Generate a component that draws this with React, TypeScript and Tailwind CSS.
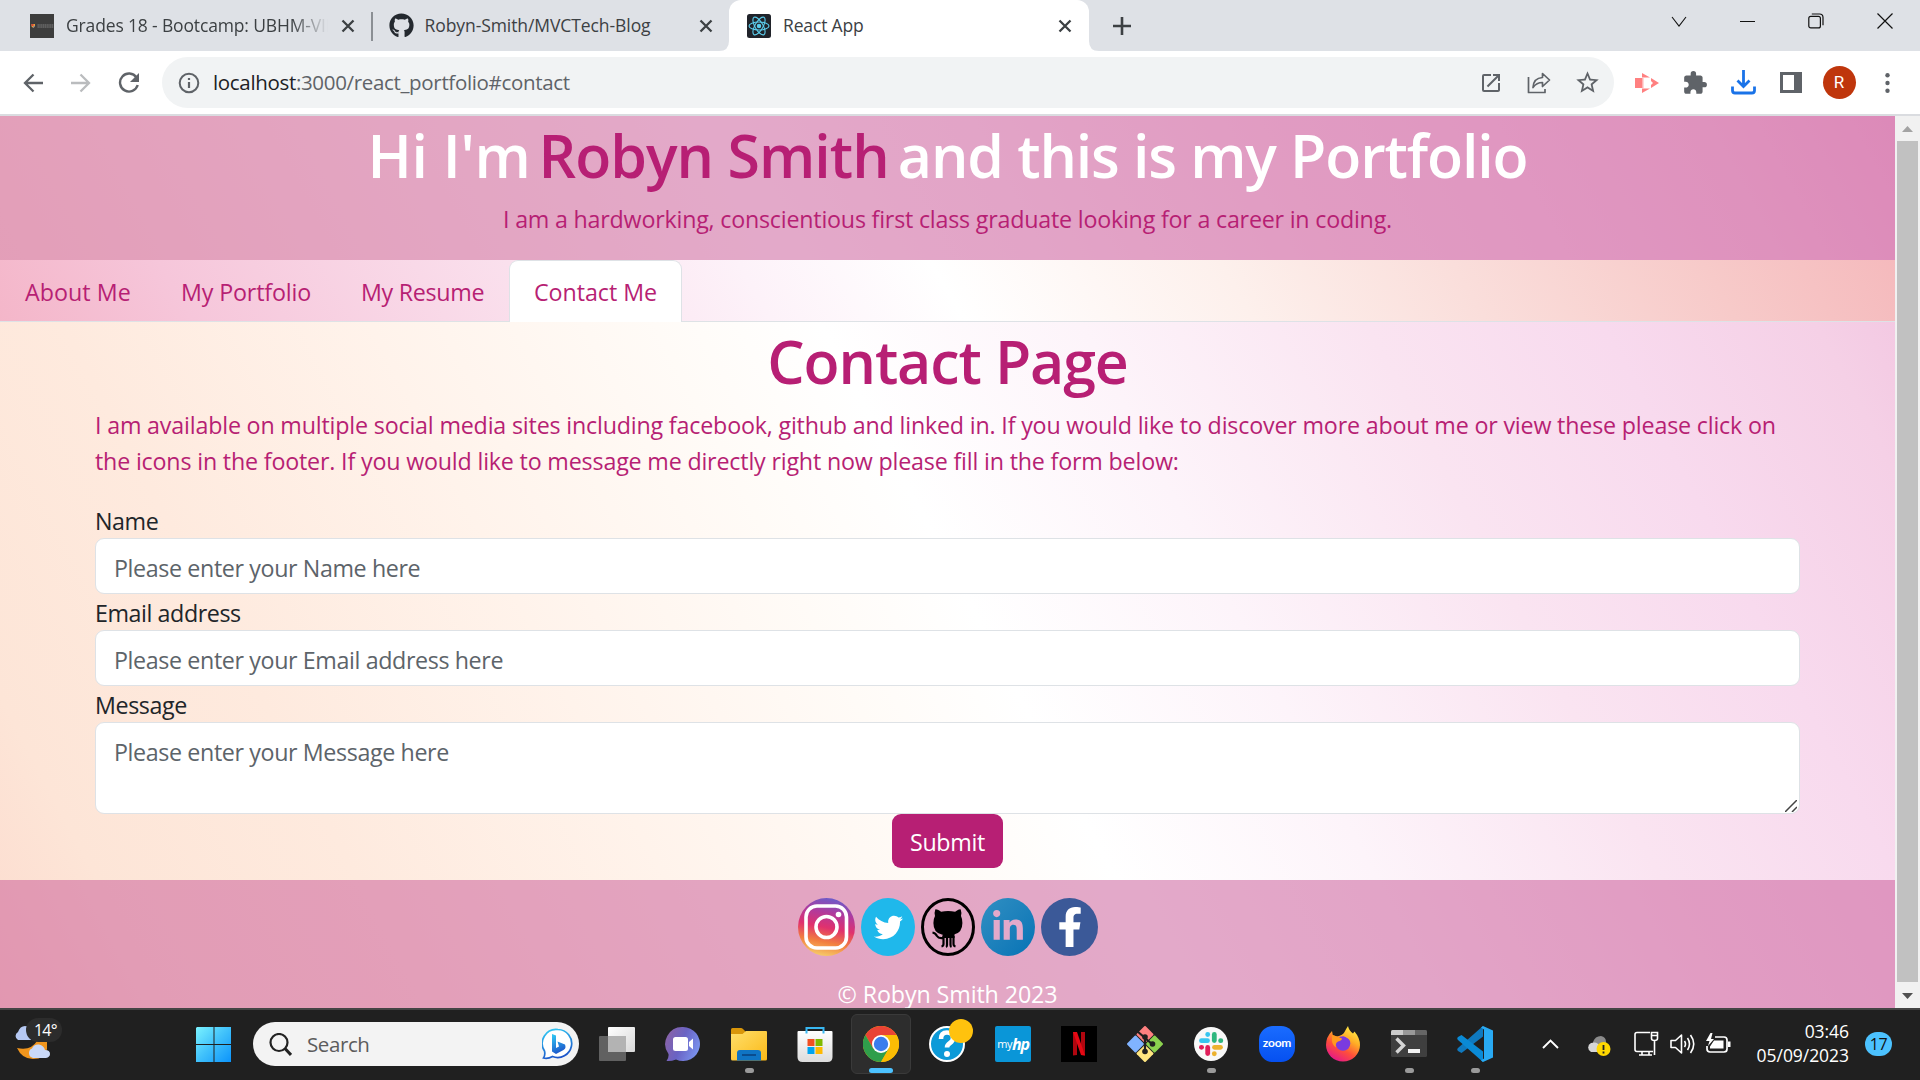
import type { ReactNode } from "react";
import { FaFacebookF, FaGithub, FaLinkedinIn, FaTwitter } from "react-icons/fa";
import { MdExtension, MdOpenInNew, MdStarBorder } from "react-icons/md";

function CloseX() {
  return (
    <svg width="14" height="14" viewBox="0 0 14 14" stroke="#3c4043" strokeWidth="2.3">
      <path d="M1.5 1.5l11 11M12.5 1.5l-11 11" />
    </svg>
  );
}

function Cell({ children }: { children: ReactNode }) {
  return <div className="flex w-12 shrink-0 items-center justify-center">{children}</div>;
}

function ReactMark() {
  return (
    <svg width="24" height="24" viewBox="0 0 24 24" fill="none" stroke="#5ccfee" strokeWidth="1.1">
      <rect width="24" height="24" rx="2.5" fill="#20232a" stroke="none" />
      <ellipse cx="12" cy="12" rx="10" ry="4" />
      <ellipse cx="12" cy="12" rx="10" ry="4" transform="rotate(60 12 12)" />
      <ellipse cx="12" cy="12" rx="10" ry="4" transform="rotate(120 12 12)" />
      <circle cx="12" cy="12" r="1.7" fill="#5ccfee" />
    </svg>
  );
}

function TabStrip() {
  return (
    <div className="flex h-[51px] bg-[#dee1e6] text-[17.5px] leading-[51px] text-[#3c4043]">
      <div className="flex w-[371px] items-center pl-[30px]">
        <svg width="24" height="24" viewBox="0 0 24 24">
          <rect width="24" height="24" fill="#3d3d3d" />
          <path d="M1.5 10h3.5v2.5l-1.7 1.6-1.8-1.6z" fill="#e8a33d" />
          <path d="M1.5 10h2v2h-2z" fill="#d8483a" />
          <path d="M3.5 12h1.5l-1.5 2z" fill="#4b74c9" />
          <path d="M7.5 11h16M7.5 13h16" stroke="#8a8a8a" strokeWidth=".9" strokeDasharray="1.4 .4" />
        </svg>
        <div className="ml-3 w-[262px] overflow-hidden whitespace-nowrap tracking-[-0.15px] [mask-image:linear-gradient(90deg,#000_86%,transparent)]">
          Grades 18 - Bootcamp: UBHM-VIRT
        </div>
        <div className="ml-[13px]"><CloseX /></div>
      </div>
      <div className="mt-3 h-[29px] w-[1.5px] bg-[#8b8f94]" />
      <div className="flex w-[356.5px] items-center pl-[16px]">
        <FaGithub size={25} color="#24292f" />
        <div className="ml-[11px] w-[274px] whitespace-nowrap tracking-[-0.08px]">Robyn-Smith/MVCTech-Blog</div>
        <CloseX />
      </div>
      <div className="relative flex w-[360px] items-center rounded-t-[12px] bg-white pl-[18px]">
        <svg className="absolute bottom-0 -left-[10px]" width="10" height="10"><path d="M10 0v10H0Q10 10 10 0" fill="#fff" /></svg>
        <svg className="absolute bottom-0 -right-[10px]" width="10" height="10"><path d="M0 0v10h10Q0 10 0 0" fill="#fff" /></svg>
        <ReactMark />
        <div className="ml-3 w-[275px] tracking-[-0.15px]">React App</div>
        <CloseX />
      </div>
      <div className="flex w-[66px] items-center justify-center">
        <svg width="18" height="18" viewBox="0 0 18 18" stroke="#3c4043" strokeWidth="2.6"><path d="M9 0v18M0 9h18" /></svg>
      </div>
      <div className="ml-auto flex h-[42px] items-center pr-px">
        <div className="flex w-[68px] justify-center">
          <svg width="16" height="11" viewBox="0 0 16 11" fill="none" stroke="#111" strokeWidth="1.1"><path d="M1 1l7 9 7-9" /></svg>
        </div>
        <div className="flex w-[69px] justify-center"><div className="h-px w-[15px] bg-[#111]" /></div>
        <div className="flex w-[68px] justify-center">
          <svg width="16" height="16" viewBox="0 0 16 16" fill="none" stroke="#111" strokeWidth="1.2">
            <rect x=".8" y="3.3" width="11.6" height="11.6" rx="2" />
            <path d="M3.8 1h7.7q3.5 0 3.5 3.5v7.7" />
          </svg>
        </div>
        <div className="flex w-[69px] justify-center">
          <svg width="16" height="16" viewBox="0 0 16 16" stroke="#111" strokeWidth="1.2"><path d="M.5.5l15 15M15.5.5l-15 15" /></svg>
        </div>
      </div>
    </div>
  );
}

function Toolbar() {
  return (
    <div className="flex h-[65px] items-center border-b-2 border-[#dadce0] bg-white pl-[9px]">
      <Cell>
        <svg width="20" height="20" viewBox="0 0 20 20" fill="none" stroke="#5f6368" strokeWidth="2.3"><path d="M20 10H2M10.5 1.5L2 10l8.5 8.5" /></svg>
      </Cell>
      <Cell>
        <svg width="20" height="20" viewBox="0 0 20 20" fill="none" stroke="#babcbe" strokeWidth="2.3"><path d="M0 10h18M9.5 1.5L18 10l-8.5 8.5" /></svg>
      </Cell>
      <Cell>
        <svg width="22" height="22" viewBox="0 0 22 22" fill="none" stroke="#5f6368" strokeWidth="2.4">
          <path d="M18.5 5.5A9 9 0 1 0 19.7 13" />
          <path d="M21 1v9h-9z" fill="#5f6368" stroke="none" />
        </svg>
      </Cell>
      <div className="ml-[9px] flex h-[51px] w-[1452px] items-center rounded-full bg-[#f1f3f4] pr-[3px]">
        <div className="flex w-[51px] justify-center pl-[3px]">
          <svg width="22" height="22" viewBox="0 0 22 22" fill="none" stroke="#5f6368" strokeWidth="2">
            <circle cx="11" cy="11" r="9.3" />
            <path d="M11 10v6M11 6v2" strokeWidth="2.2" />
          </svg>
        </div>
        <div className="flex-1 text-[20.5px] leading-[51px] tracking-[-0.33px] text-[#5f6368]">
          <span className="text-[#202124]">localhost</span>:3000/react_portfolio#contact
        </div>
        <Cell><MdOpenInNew size={24} color="#5f6368" /></Cell>
        <Cell>
          <svg width="24" height="24" viewBox="0 0 24 24" fill="none" stroke="#5f6368" strokeWidth="1.7" strokeLinejoin="round">
            <path d="M1.5 6v15.5H18V18" />
            <path d="M15.5 2.5l7 6.5-7 6.5v-4q-6 0-9.5 5 .5-9.5 9.5-10z" />
          </svg>
        </Cell>
        <Cell><MdStarBorder size={27} color="#5f6368" /></Cell>
      </div>
      <div className="ml-[9px] flex">
        <Cell>
          <svg width="24" height="20" viewBox="0 0 24 20" fill="#ff8080">
            <path d="M0 5h7v10H0z" />
            <path d="M7 4.500V0l8 4.500zM7 15.500V20l8-4.500zM16 5l8 5-8 5v-3l2-2-2-2z" />
            <path d="M7 5h1.500v10H7z" fill="#ffb3b3" />
          </svg>
        </Cell>
        <Cell><MdExtension size={26} color="#5f6368" /></Cell>
        <Cell>
          <svg width="25" height="25" viewBox="0 0 25 25" fill="none" stroke="#1a73e8" strokeWidth="2.8">
            <path d="M12.5 0v16M6.5 10.5l6 6 6-6M1.5 16.5v4q0 2.5 2.5 2.5h17q2.500 0 2.500-2.5v-4" />
          </svg>
        </Cell>
        <Cell>
          <svg width="22" height="21" viewBox="0 0 22 21"><path fill="#5f6368" fillRule="evenodd" d="M0 0h22v21H0zM3 3v15h11V3z" /></svg>
        </Cell>
        <Cell>
          <div className="h-[33px] w-[33px] rounded-full bg-[#bf360c] text-center font-[Roboto] text-[17px] leading-[33px] text-white">R</div>
        </Cell>
        <Cell>
          <svg width="5" height="20" viewBox="0 0 5 20" fill="#5f6368"><circle cx="2.5" cy="2.3" r="2.2" /><circle cx="2.5" cy="10" r="2.2" /><circle cx="2.5" cy="17.7" r="2.2" /></svg>
        </Cell>
      </div>
    </div>
  );
}

function PageHeader() {
  return (
    <header className="h-36 bg-[#c75393]/50 pt-[3px] text-center">
      <h1 className="text-[59px] leading-[72px] font-semibold whitespace-nowrap text-white">
        <span className="tracking-[-0.3px]">Hi I'm</span>
        <span className="mr-[9px] ml-[8px] tracking-[-0.95px] text-[#b71f74]">Robyn Smith</span>
        <span className="tracking-[-1.1px]">and this is my Portfolio</span>
      </h1>
      <p className="mt-[10px] text-[23.25px] leading-9 tracking-[-0.21px] text-[#b71f74]">
        I am a hardworking, conscientious first class graduate looking for a career in coding.
      </p>
    </header>
  );
}

function NavTabs() {
  return (
    <nav className="flex h-[62px] bg-[linear-gradient(60deg,#f4b6c9_0%,#f6c6da_10%,#fae0ed_28%,#fdf2f9_40%,#ffffff_50%,#fdf0ec_65%,#fadedb_77%,#f7cac9_90%,#f5babd_100%)] text-[23.25px] leading-[62px] tracking-[-0.05px] text-[#b71f74]">
      <div className="w-[156px] border-b border-[#dee2e6] pt-[1px] pl-[25px] tracking-[0.05px]">About Me</div>
      <div className="w-[180px] border-b border-[#dee2e6] pt-[1px] pl-[25px] tracking-[-0.15px]">My Portfolio</div>
      <div className="w-[173px] border-b border-[#dee2e6] pt-[1px] pl-[25px] tracking-[-0.3px]">My Resume</div>
      <div className="w-[173px] rounded-t-[9px] border border-b-0 border-[#dee2e6] bg-white pl-[24px]">Contact Me</div>
      <div className="flex-1 border-b border-[#dee2e6]" />
    </nav>
  );
}

function Field({ label, hint, area }: { label: string; hint: string; area?: boolean }) {
  return (
    <div>
      <div className="h-9 pt-px text-[23.25px] leading-9 tracking-[-0.42px] text-[#212529]">{label}</div>
      <div className={area ? "relative h-[92px] rounded-[9px] border border-[#dee2e6] bg-white px-[18px] pt-[11px]" : "h-14 rounded-[9px] border border-[#dee2e6] bg-white px-[18px] pt-[11px]"}>
        <div className="text-[23.25px] leading-9 tracking-[-0.38px] text-[#5d646a]">{hint}</div>
        {area && (
          <svg className="absolute right-[2px] bottom-[1px]" width="12" height="12" viewBox="0 0 12 12" stroke="#444" strokeWidth="1.5"><path d="M0 12L12 0M7 12l5-5" /></svg>
        )}
      </div>
    </div>
  );
}

function SocialIcons() {
  return (
    <div className="flex h-[58px] gap-[6px] pl-[798px]">
      <svg width="57" height="58" viewBox="0 0 57 58">
        <defs>
          <linearGradient id="ig" x1=".35" y1="1" x2=".55" y2="0">
            <stop offset="0" stopColor="#f7cf6b" /><stop offset=".25" stopColor="#f2803f" /><stop offset=".5" stopColor="#e0316e" /><stop offset=".75" stopColor="#b13a9c" /><stop offset="1" stopColor="#6c5bc9" />
          </linearGradient>
        </defs>
        <ellipse cx="28.5" cy="29" rx="28.5" ry="29" fill="url(#ig)" />
        <rect x="8" y="8" width="40.500" height="42" rx="11" fill="none" stroke="#fff" strokeWidth="3.6" />
        <circle cx="28.5" cy="29" r="10.500" fill="none" stroke="#fff" strokeWidth="3.6" />
        <circle cx="40.500" cy="16.500" r="2.8" fill="#fff" />
      </svg>
      <div className="flex h-[58px] w-[54px] items-center justify-center rounded-[50%] bg-[#1fb8eb]"><FaTwitter size={29} color="#fff" /></div>
      <svg width="54" height="58" viewBox="0 0 54 58">
        <ellipse cx="27" cy="29" rx="25.5" ry="27.5" fill="none" stroke="#000" strokeWidth="3" />
        <path d="M14.300 11.500q.8-.8 5.800 2.200 7-1.500 14 0 4.800-3 5.600-2.200 1.200 3.200.3 6.500 1.400 2.800 1.400 7 0 9.800-8.400 11.500H20.800q-8.400-1.700-8.400-11.500 0-4.200 1.600-7-.9-3.300.3-6.500z" />
        <path d="M11.500 34.500q3 .5 4.500 3.500 1.500 2.500 5.500 2M22.500 38v8q0 2-2 2.500M26 38v9q0 1.500-1 2M29.500 38v9q0 1.500 1 2M32.500 38v8q0 2 2 2.500" fill="none" stroke="#000" strokeWidth="2.2" />
        <path d="M21.500 36h12v4h-12z" />
      </svg>
      <div className="flex h-[58px] w-[54px] items-center justify-center rounded-[50%] bg-linear-to-br from-[#2f8fc2] to-[#0273b5]"><FaLinkedinIn size={34} color="#e3a9ca" className="-mt-px" /></div>
      <div className="flex h-[58px] w-[57px] items-center justify-center rounded-[50%] bg-[#3b5998]"><FaFacebookF size={40} color="#fff" /></div>
    </div>
  );
}

function Scrollbar() {
  return (
    <div className="flex w-[25px] flex-col items-center bg-[#f1f1f1]">
      <svg width="25" height="25" viewBox="0 0 25 25"><path d="M7 16l5.5-6 5.5 6z" fill="#a3a3a3" /></svg>
      <div className="w-[21px] flex-1 bg-[#c1c1c1]" />
      <svg width="25" height="26" viewBox="0 0 25 26"><path d="M7 11l5.5 6 5.5-6z" fill="#505050" /></svg>
    </div>
  );
}

function WebPage() {
  return (
    <div className="flex h-[892px] overflow-hidden">
      <div className="h-[892px] w-[1895px] bg-[linear-gradient(62deg,#fcdbce_0%,#fde5d7_7%,#feeade_18%,#fff3eb_31%,#fffbf7_43%,#ffffff_50%,#fdf4fa_61%,#fae4f1_73%,#f8daee_83%,#f5d0e6_92%,#f1c0de_100%)]">
        <PageHeader />
        <NavTabs />
        <main className="h-[558px] px-[95px] pt-[3px]">
          <h2 className="text-center text-[59px] leading-[72px] font-semibold tracking-[-1.1px] text-[#b71f74]">Contact Page</h2>
          <p className="mt-[10px] mb-[23px] text-[23.25px] leading-9 tracking-[-0.18px] whitespace-nowrap text-[#b71f74]">
            I am available on multiple social media sites including facebook, github and linked in. If you would like to discover more about me or view these please click on
            <br />
            the icons in the footer. If you would like to message me directly right now please fill in the form below:
          </p>
          <Field label="Name" hint="Please enter your Name here" />
          <Field label="Email address" hint="Please enter your Email address here" />
          <Field label="Message" hint="Please enter your Message here" area />
          <div className="mx-auto h-[54px] w-[111px] rounded-[9px] bg-[#b71f74] pt-[1px] text-center text-[23.25px] leading-[54px] tracking-[-0.3px] text-white">Submit</div>
        </main>
        <footer className="h-[128px] bg-[#c75393]/50 pt-[18px]">
          <SocialIcons />
          <p className="mt-[20px] text-center text-[23.25px] leading-8 tracking-[-0.1px] text-white"><span className="relative top-[2px]">© Robyn Smith 2023</span></p>
        </footer>
      </div>
      <Scrollbar />
    </div>
  );
}

function AppSlot({ children, mark }: { children: ReactNode; mark?: boolean }) {
  return (
    <div className="flex h-[70px] w-[66px] flex-col items-center pt-[16px]">
      <div className="h-9 w-9">{children}</div>
      {mark && <div className="mt-[6px] h-[5px] w-[9px] rounded-full bg-[#9a9a9a]" />}
    </div>
  );
}

function PinnedApps() {
  return (
    <div className="ml-[5px] flex">
      <AppSlot>
        <svg width="36" height="36" viewBox="0 0 36 36">
          <defs><linearGradient id="tv" x2="1" y2="1"><stop stopColor="#fff" /><stop offset="1" stopColor="#d8d8d8" /></linearGradient></defs>
          <rect x="9" y="1" width="27" height="25" rx="1" fill="url(#tv)" />
          <rect x="0" y="10" width="27" height="25" rx="1" fill="#777" fillOpacity=".75" />
          <path d="M9 10h18v16H9z" fill="#b3b3b3" />
        </svg>
      </AppSlot>
      <AppSlot>
        <svg width="36" height="36" viewBox="0 0 36 36">
          <defs><linearGradient id="ch" x1="0" y1=".2" x2="1" y2=".6"><stop stopColor="#8b62a5" /><stop offset=".5" stopColor="#6a63c4" /><stop offset="1" stopColor="#7a93ee" /></linearGradient></defs>
          <path d="M18 1a17 17 0 1 1-7 32.500Q6 35.500 1.500 35q2.500-3 2-7A17 17 0 0 1 18 1z" fill="url(#ch)" />
          <rect x="8" y="11" width="15" height="14" rx="2.5" fill="#fff" />
          <path d="M24 16l4-3.500v11L24 20z" fill="#fff" />
        </svg>
      </AppSlot>
      <AppSlot mark>
        <svg width="36" height="36" viewBox="0 0 36 36">
          <defs><linearGradient id="fo" x2="1" y2="1"><stop stopColor="#ffdf6b" /><stop offset="1" stopColor="#fbb917" /></linearGradient></defs>
          <path d="M0 3.500Q0 2 1.500 2H10q1 0 2 1l3 3v4H0z" fill="#d9960a" />
          <path d="M0 8h11.500L15 5h20q1 0 1 1v27q0 1.500-1.500 1.500h-33Q0 34.500 0 33z" fill="url(#fo)" />
          <path d="M6 34.500V27q0-3 3-3h18q3 0 3 3v7.500z" fill="#0f74c4" />
          <path d="M11 29h14" stroke="#0a3f7d" strokeWidth="1.5" />
        </svg>
      </AppSlot>
      <AppSlot>
        <svg width="36" height="36" viewBox="0 0 36 36">
          <defs><linearGradient id="st" x2="0" y2="1"><stop stopColor="#fff" /><stop offset="1" stopColor="#dcdcdc" /></linearGradient></defs>
          <path d="M.5 6q0-1 1-1h33q1 0 1 1v25q0 5-5 5h-25q-5 0-5-5z" fill="url(#st)" />
          <path d="M9.500 7.500V2h17v5.500" fill="none" stroke="#38b7f1" strokeWidth="2" />
          <path d="M10.500 13h7v7h-7z" fill="#f25022" /><path d="M18.500 13h7v7h-7z" fill="#7fba00" />
          <path d="M10.500 21h7v7h-7z" fill="#00a4ef" /><path d="M18.500 21h7v7h-7z" fill="#ffb900" />
        </svg>
      </AppSlot>
      <div className="flex h-[70px] w-[66px] justify-center pt-[4px]">
        <div className="flex h-[60px] w-[60px] flex-col items-center rounded-[6px] border border-[#3a3a3a] bg-[#2d2d2d] pt-[11px]">
          <svg className="shrink-0" width="36" height="36" viewBox="0 0 48 48">
            <circle cx="24" cy="24" r="24" fill="#fbbc04" />
            <path d="M24 12h20.800A24 24 0 0 0 3.200 12l10.400 18L24 24z" fill="#ea4335" />
            <path d="M3.200 12A24 24 0 0 0 24 48l10.400-18H13.600z" fill="#2f9e4b" />
            <path d="M44.800 12H24l10.400 18L24 48A24 24 0 0 0 44.800 12z" fill="#fbbc04" />
            <circle cx="24" cy="24" r="12" fill="#fff" /><circle cx="24" cy="24" r="9.6" fill="#3b7ded" />
          </svg>
          <div className="mt-[6px] h-[5px] w-6 shrink-0 rounded-full bg-[#4cc2ff]" />
        </div>
      </div>
      <div className="relative">
        <AppSlot>
          <svg width="36" height="36" viewBox="0 0 36 36">
            <circle cx="18" cy="18" r="17" fill="#0c9ad8" stroke="#fff" strokeWidth="2" />
            <path d="M12 13q0-6.500 6-6.500t6 5.500q0 3-3 5t-3 4.500" fill="none" stroke="#fff" strokeWidth="4.6" />
            <circle cx="18" cy="28" r="3" fill="#fff" />
          </svg>
        </AppSlot>
        <div className="absolute top-[9px] right-[7px] h-6 w-6 rounded-full bg-[#ffc20e]" />
      </div>
      <AppSlot>
        <div className="flex h-9 w-9 items-center justify-center rounded-[2px] bg-[#0a96d8] leading-9 text-white">
          <span className="text-[11px] tracking-[-0.4px]">my</span>
          <span className="text-[16px] font-bold tracking-[-1.2px] italic">hp</span>
        </div>
      </AppSlot>
      <AppSlot>
        <svg width="36" height="36" viewBox="0 0 36 36">
          <path d="M0 0h36v36H0z" fill="#000" />
          <path d="M12 6h4v23l-4 .5zM20 6h4v23.500l-4-.5z" fill="#b1060f" />
          <path d="M12 6h4l8 23.500-4-.5z" fill="#e50914" />
        </svg>
      </AppSlot>
      <AppSlot>
        <svg width="36" height="36" viewBox="0 0 36 36">
          <g transform="rotate(45 18 18)">
            <rect x="5" y="5" width="12.5" height="12.5" rx="1" fill="#ff8080" />
            <rect x="18.5" y="5" width="12.5" height="12.5" rx="1" fill="#8bd14f" />
            <rect x="5" y="18.5" width="12.5" height="12.5" rx="1" fill="#80b3ff" />
            <rect x="18.5" y="18.5" width="12.5" height="12.5" rx="1" fill="#ffe680" />
          </g>
          <path d="M10 5l8 7v14M18 12l7 6" fill="none" stroke="#202020" strokeWidth="2.2" />
          <circle cx="18" cy="11" r="2.8" fill="#202020" /><circle cx="18" cy="25.5" r="2.8" fill="#202020" /><circle cx="25.5" cy="18" r="2.8" fill="#202020" />
        </svg>
      </AppSlot>
      <AppSlot mark>
        <svg width="36" height="36" viewBox="0 0 36 36" strokeLinecap="round" strokeWidth="4.8">
          <circle cx="18" cy="18" r="17" fill="#f8f8f8" />
          <path d="M8.500 14.700h6" stroke="#36c5f0" /><path d="M14.700 8.300v.2" stroke="#36c5f0" />
          <path d="M21.300 8.500v6" stroke="#2eb67d" /><path d="M27.600 14.700h.2" stroke="#2eb67d" />
          <path d="M21.500 21.300h6" stroke="#ecb22e" /><path d="M21.300 27.600v.2" stroke="#ecb22e" />
          <path d="M14.700 21.500v6" stroke="#e01e5a" /><path d="M8.400 21.300h.2" stroke="#e01e5a" />
        </svg>
      </AppSlot>
      <AppSlot>
        <div className="h-9 w-9 rounded-[14px] bg-linear-to-b from-[#1a6cff] to-[#0650f0] text-center font-[Lato] text-[12px] leading-[34px] font-bold tracking-[-0.2px] text-white">zoom</div>
      </AppSlot>
      <AppSlot>
        <svg width="36" height="36" viewBox="0 0 36 36">
          <defs>
            <linearGradient id="ff" x1=".85" y1=".05" x2=".3" y2="1"><stop stopColor="#fff04a" /><stop offset=".35" stopColor="#ffab25" /><stop offset=".65" stopColor="#ff4f3a" /><stop offset="1" stopColor="#e5178b" /></linearGradient>
          </defs>
          <path d="M23 0q1 5 5 7.500l1.500-2Q35 12 35 19A17 16.500 0 0 1 1 19Q1 11 7 5l.8 4 4.200 1.500Q18 9 19.500 6T23 0z" fill="url(#ff)" />
          <circle cx="18" cy="17.5" r="7.3" fill="#7a3be0" />
          <path d="M7 9q5 1 10 3.500 0 2-4 3-3 1.500-2 6-4-3-4-7z" fill="#ff9a1f" />
          <path d="M19 10q6-1 8.500 4-2-1-3-.5z" fill="#ffb52b" />
        </svg>
      </AppSlot>
      <AppSlot mark>
        <svg width="36" height="36" viewBox="0 0 36 36">
          <rect x="0" y="4" width="36" height="27" rx="1.5" fill="#3f3f3f" />
          <path d="M0 9V5.500Q0 4 1.500 4H12v5z" fill="#ccc" /><path d="M12 4h12v5H12z" fill="#999" /><path d="M24 4h10.500Q36 4 36 5.500V9H24z" fill="#666" />
          <path d="M5.500 12.500l7 7-7 7" fill="none" stroke="#d5d5d5" strokeWidth="3.4" /><path d="M17 23h12v4H17z" fill="#f2f2f2" />
        </svg>
      </AppSlot>
      <AppSlot mark>
        <svg width="36" height="36" viewBox="0 0 36 36">
          <path d="M26 0v10.500L4.500 27 1 25q-1.500-1.500 0-3z" fill="#0f79bf" />
          <path d="M4.500 9L26 25.500V36L1 14q-1.500-1.500 0-3z" fill="#0a8ad6" />
          <path d="M26 0l10 4.500v27L26 36l-2-1.500 3-2V3.500l-3-2z" fill="#29aaf3" />
        </svg>
      </AppSlot>
    </div>
  );
}

function Tray() {
  return (
    <div className="ml-auto flex items-center pb-[3px]">
      <svg width="17" height="10" viewBox="0 0 17 10" fill="none" stroke="#fff" strokeWidth="1.9"><path d="M1 9l7.500-7.500L16 9" /></svg>
      <svg className="mt-[3px] ml-[27px]" width="25" height="21" viewBox="0 0 25 21">
        <path d="M7 7q2-6 8-6 5 1 5 6v6H7z" fill="#8b8b8b" />
        <path d="M5 17a5 5 0 0 1 0-9q7-2 9 4v5z" fill="#d6d6d6" />
        <circle cx="17.5" cy="14" r="7" fill="#ffd800" /><path d="M17.500 10v5M17.500 16.500v2" stroke="#222" strokeWidth="1.8" />
      </svg>
      <svg className="ml-[23px]" width="25" height="25" viewBox="0 0 25 25" fill="none" stroke="#fff" strokeWidth="1.6">
        <path d="M16 1.500H3q-2 0-2 2v15q0 2 2 2h16M5 24h13M8 20.500V24M15 20.500V24M17.500 1.500h6v6q0 2-3 2t-3-2zM17.500 4.500h6M20.500 9.500V24" />
      </svg>
      <svg className="ml-[11px]" width="25" height="22" viewBox="0 0 25 22" fill="none" stroke="#fff" strokeWidth="1.6" strokeLinejoin="round">
        <path d="M1 7.500h4.500l6-5.500v18l-6-5.500H1zM14.500 8q2 3 0 6M17.500 5q4 6 0 12M20.500 2q6.500 9 0 18" />
      </svg>
      <svg className="ml-[10px]" width="26" height="22" viewBox="0 0 26 22">
        <path d="M10 4h9q3 0 3 3v9q0 3-3 3H5q-3 0-3-3v-3" fill="none" stroke="#fff" strokeWidth="1.7" />
        <path d="M9 7.500h9.500v8H5v-2zM23 8.500h2.500v5.500H23zM5.500 0L1 8h3.500L3 13l6-7H6l1.500-6z" fill="#fff" />
      </svg>
      <div className="ml-[23px] w-[95px] pb-[1px] text-right text-[17.5px] leading-6 tracking-[-0.05px] text-white">
        <div>03:46</div>
        <div>05/09/2023</div>
      </div>
      <div className="mr-[28px] ml-[16px] h-6 w-[27px] rounded-full bg-[#4cc2ff] text-center text-[16px] leading-6 tracking-[-0.5px] text-[#111]">17</div>
    </div>
  );
}

function Taskbar() {
  return (
    <div className="flex h-[72px] border-t-2 border-[#444] bg-[#202020]">
      <div className="relative w-[196px]">
        <svg className="mt-[15px] ml-[14px]" width="38" height="36" viewBox="0 0 38 36">
          <path d="M4 15a4.500 4.500 0 0 1 0-8Q6 1 11 1t6 6v8z" fill="#b5c8f2" />
          <path d="M33 16v8q-2 10-14 10Q8 34 3 23q14 3 20-7z" fill="#f0951d" />
          <path d="M19 33a5 5 0 0 1-1-9.500Q20 19 25 19.500q5 1 6 5.500 5 0 5 4 0 3-4 4z" fill="#c9d8f7" />
        </svg>
        <div className="absolute top-[8px] left-[26px] h-6 w-9 rounded-full bg-[#2c2c2c] pl-[8px] text-[16px] leading-[24px] tracking-[-0.8px] text-white">14°</div>
      </div>
      <svg className="mt-[17px]" width="36" height="35" viewBox="0 0 36 35">
        <defs><linearGradient id="win" x1="0" y1="0" x2="36" y2="35" gradientUnits="userSpaceOnUse"><stop stopColor="#7bf3ff" /><stop offset=".5" stopColor="#3fc0fb" /><stop offset="1" stopColor="#0a92fb" /></linearGradient></defs>
        <path d="M1 0h16.500v17H0V1zM18.500 0H35v17H18.500zM0 18h17.500v17H0zM18.500 18H35v17H18.500z" fill="url(#win)" />
      </svg>
      <div className="mt-3 ml-[21px] flex h-11 w-[326px] items-center rounded-full bg-[#f3f3f3] pr-[6px] pl-[16px]">
        <svg width="23" height="23" viewBox="0 0 23 23" fill="none" stroke="#222" strokeWidth="2.2"><circle cx="10" cy="9.5" r="8.5" /><path d="M16 15.500l6 6.500" strokeWidth="3" /></svg>
        <div className="ml-[15px] flex-1 text-[20.5px] leading-[44px] tracking-[-0.4px] text-[#5c5c5c]">Search</div>
        <svg width="31" height="32" viewBox="0 0 31 32">
          <defs><linearGradient id="bi" x1=".3" y1="0" x2=".6" y2="1"><stop stopColor="#2fc4f2" /><stop offset="1" stopColor="#1b50c8" /></linearGradient></defs>
          <path d="M16 1.500a14 14 0 1 1-5.500 27Q6 31 1.500 30q2-3 1-7A14 14 0 0 1 16 1.500z" fill="#fff" stroke="url(#bi)" strokeWidth="1.7" />
          <path d="M10 6l4 1.500V20l3-1.500-1.500-5 7.500 3q1.500 4-1.500 5.500L14 26l-4-2.500z" fill="url(#bi)" />
        </svg>
      </div>
      <PinnedApps />
      <Tray />
    </div>
  );
}

export default function App() {
  return (
    <div className="h-[1080px] w-[1920px] overflow-hidden bg-white font-['Open_Sans','Noto_Sans',sans-serif]">
      <TabStrip />
      <Toolbar />
      <WebPage />
      <Taskbar />
    </div>
  );
}
